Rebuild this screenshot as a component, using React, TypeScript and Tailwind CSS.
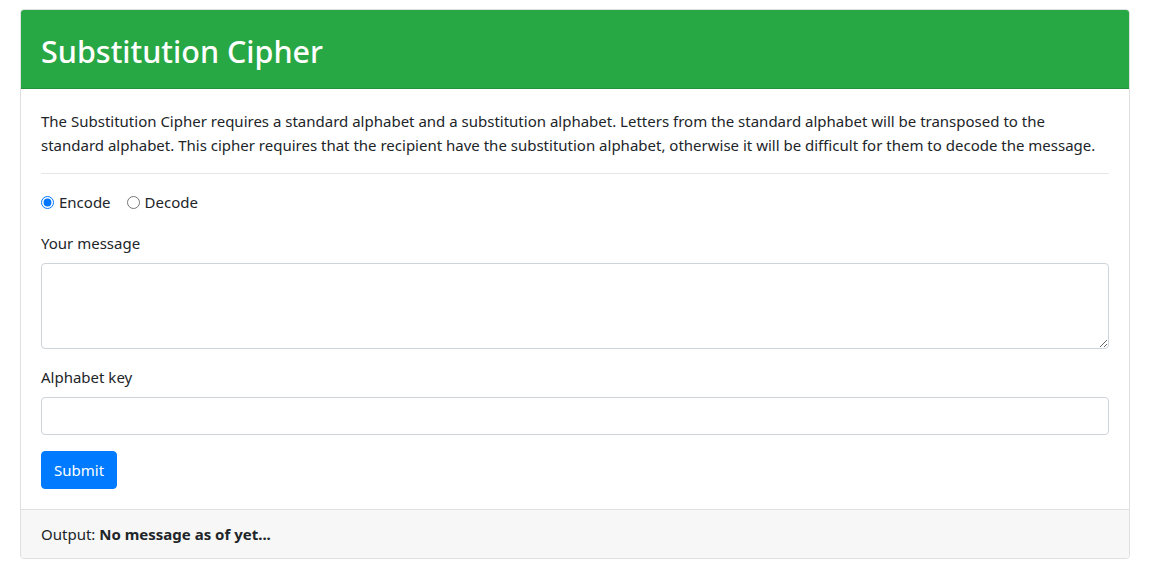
import React, { useState } from "react";

export default function App() {
  const [mode, setMode] = useState("encode");
  return (
    <div className="min-h-[573px] bg-white pt-[9px] pl-[20px] font-['Noto_Sans',sans-serif] text-[15px] leading-[24px] text-[#212529]">
      <div className="flex w-[1110px] flex-col rounded-[4px] border border-[#dfdfdf]">
        <div className="rounded-t-[3px] border-b border-[#23923c] bg-[#28a745] px-5 pt-[22px] pb-[18px]">
          <h2 className="text-[30.5px] font-medium leading-[38.4px] text-white">Substitution Cipher</h2>
        </div>
        <div className="flex flex-col p-5">
          <p className="mb-4">
            The Substitution Cipher requires a standard alphabet and a substitution alphabet. Letters from the standard alphabet will be transposed to the standard alphabet. This cipher requires that the recipient have the substitution alphabet, otherwise it will be difficult for them to decode the message.
          </p>
          <hr className="mb-4 border-t border-[#e6e6e6]" />
          <div className="mb-[17px] flex items-center">
            <label className="mr-[16px] flex items-center gap-[5px]">
              <input
                type="radio"
                name="mode"
                checked={mode === "encode"}
                onChange={() => setMode("encode")}
                className="m-0 h-[13px] w-[13px] accent-[#0075ff]"
              />
              <span>Encode</span>
            </label>
            <label className="flex items-center gap-[5px]">
              <input
                type="radio"
                name="mode"
                checked={mode === "decode"}
                onChange={() => setMode("decode")}
                className="m-0 h-[13px] w-[13px] accent-[#0075ff]"
              />
              <span>Decode</span>
            </label>
          </div>
          <div className="mb-4 flex flex-col">
            <label className="mb-2">Your message</label>
            <textarea
              rows={3}
              className="h-[86px] w-full resize-y rounded-[4px] border border-[#ced4da] px-3 py-[6px] outline-none"
            />
          </div>
          <div className="mb-4 flex flex-col">
            <label className="mb-2">Alphabet key</label>
            <input
              type="text"
              className="h-[38px] w-full rounded-[4px] border border-[#ced4da] px-3 py-[6px] outline-none"
            />
          </div>
          <div>
            <button className="h-[38px] rounded-[4px] border border-[#007bff] bg-[#007bff] px-3 text-white">
              Submit
            </button>
          </div>
        </div>
        <div className="rounded-b-[3px] border-t border-[#dfdfdf] bg-[#f7f7f7] px-5 py-3">
          Output: <b className="font-bold">No message as of yet...</b>
        </div>
      </div>
    </div>
  );
}
